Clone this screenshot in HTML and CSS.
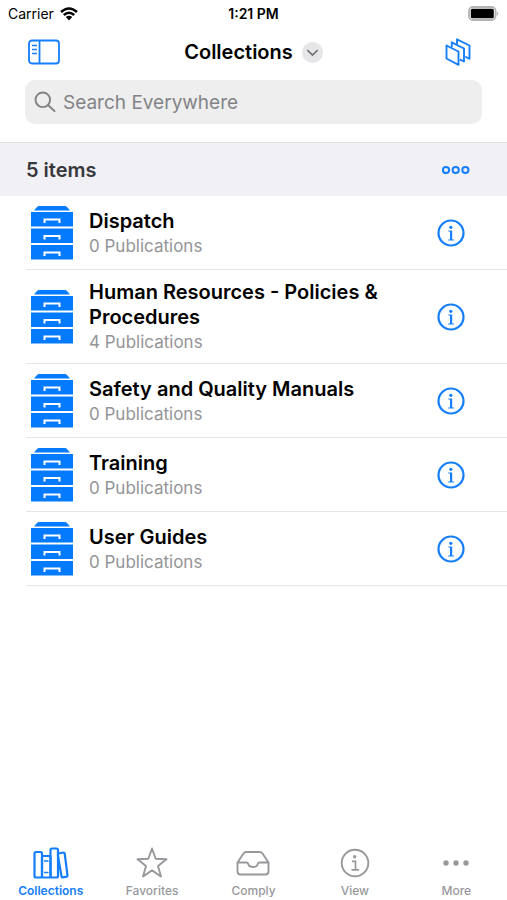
FILE: index.html
```html
<!DOCTYPE html>
<html lang="en">
<head>
<meta charset="utf-8">
<meta name="viewport" content="width=device-width, initial-scale=1">
<title>Collections</title>
<link rel="stylesheet" href="styles.css">
</head>
<body>
<svg class="symbols" aria-hidden="true">
  <symbol id="cabinet" viewBox="0 0 42 54">
    <path fill="currentColor" d="M3 4.500 6 1Q7 0 8 0H34Q35 0 36 1L39 4.500ZM0 6H42V20.500H0ZM0 22.500H42V37H0ZM0 39H42V53.500H0Z"/>
    <path fill="none" stroke="#fff" stroke-width="2" d="M13.500 17V13.500H28.500V17M13.500 33.500V30H28.500V33.500M13.500 50V46.500H28.500V50"/>
  </symbol>
  <symbol id="info" viewBox="0 0 28 28">
    <circle cx="14" cy="14" r="12.500" fill="none" stroke="currentColor" stroke-width="2.200"/>
    <circle cx="13.800" cy="8.300" r="1.600" fill="currentColor"/>
    <path fill="currentColor" d="M11.300 11.500H15.200V20.500H17V21.600H11.200V20.500H13V12.600H11.300Z"/>
  </symbol>
</svg>
<div class="app">
  <header>
    <div class="status">
      <span class="carrier">Carrier
        <svg width="18" height="14" viewBox="0 0 18 14" fill="none" stroke="#000" stroke-width="2.400"><path d="M1 5Q9-2 17 5M3.800 8Q9 3.300 14.200 8"/><path fill="#000" stroke="none" d="M5.800 10Q9 7.300 12.200 10L9 13.500Z"/></svg>
      </span>
      <time>1:21 PM</time>
      <svg class="battery" width="31" height="15" viewBox="0 0 31 15"><rect x="1" y="1" width="26.500" height="13" rx="4" fill="#fff" stroke="#b4b4b4" stroke-width="1.800"/><rect x="2.800" y="2.800" width="23" height="9.500" rx="1.500" fill="#000"/><path d="M28.800 5Q31.500 7.500 28.800 10Z" fill="#b4b4b4"/></svg>
    </div>
    <div class="nav">
      <button class="icon-button" aria-label="Toggle sidebar">
        <svg width="32" height="26" viewBox="0 0 32 26" fill="none" stroke="currentColor" stroke-width="1.800"><rect x="1" y="1.500" width="30" height="23" rx="3"/><path d="M11.500 1.500V24.500"/><path stroke-width="1.300" d="M4 6.500H9M4 10.500H9M4 14.500H9"/></svg>
      </button>
      <button class="title"><h1>Collections</h1>
        <svg width="21" height="21" viewBox="0 0 21 21"><circle cx="10.500" cy="10.500" r="10.500" fill="#e6e6e8"/><path d="M5.800 8.500 10.500 13 15.200 8.500" fill="none" stroke="#6e6e73" stroke-width="1.700" stroke-linecap="round"/></svg>
      </button>
      <button class="icon-button stacks" aria-label="Stacks">
        <svg width="26" height="28" viewBox="0 0 26 28" fill="none" stroke="currentColor" stroke-width="1.900" stroke-linejoin="round" stroke-linecap="round"><path d="M1.500 7.500 13.500 13.500V26.800L1.500 20.500Z"/><path d="M6.800 8.500V4.300L19 10.500V23.500L15.500 21.800"/><path d="M12 5.500V1.300L24.500 7.500V20.800L21 19"/></svg>
      </button>
    </div>
    <label class="search">
      <svg width="22" height="22" viewBox="0 0 22 22" fill="none" stroke="currentColor" stroke-width="1.900" stroke-linecap="round"><circle cx="8.800" cy="8.800" r="7.300"/><path d="M14.200 14.200 20.500 20"/></svg>
      <input type="search" placeholder="Search Everywhere" aria-label="Search Everywhere">
    </label>
  </header>
  <main>
    <div class="section">
      <h2>5 items</h2>
      <button class="icon-button" aria-label="Options">
        <svg width="28" height="10" viewBox="0 0 28 10" fill="none" stroke="currentColor" stroke-width="2"><circle cx="4" cy="5" r="3.100"/><circle cx="13.700" cy="5" r="3.100"/><circle cx="23.400" cy="5" r="3.100"/></svg>
      </button>
    </div>
    <ul class="list">
      <li><svg class="cabinet"><use href="#cabinet"/></svg><div class="text"><h3>Dispatch</h3><p>0 Publications</p></div><button class="icon-button" aria-label="About Dispatch"><svg class="info"><use href="#info"/></svg></button></li>
      <li><svg class="cabinet"><use href="#cabinet"/></svg><div class="text"><h3>Human Resources - Policies &amp; Procedures</h3><p>4 Publications</p></div><button class="icon-button" aria-label="About Human Resources"><svg class="info"><use href="#info"/></svg></button></li>
      <li><svg class="cabinet"><use href="#cabinet"/></svg><div class="text"><h3>Safety and Quality Manuals</h3><p>0 Publications</p></div><button class="icon-button" aria-label="About Safety and Quality Manuals"><svg class="info"><use href="#info"/></svg></button></li>
      <li><svg class="cabinet"><use href="#cabinet"/></svg><div class="text"><h3>Training</h3><p>0 Publications</p></div><button class="icon-button" aria-label="About Training"><svg class="info"><use href="#info"/></svg></button></li>
      <li><svg class="cabinet"><use href="#cabinet"/></svg><div class="text"><h3>User Guides</h3><p>0 Publications</p></div><button class="icon-button" aria-label="About User Guides"><svg class="info"><use href="#info"/></svg></button></li>
    </ul>
  </main>
  <nav class="tabs">
    <a href="#collections" class="active" aria-current="page">
      <svg width="36" height="32" viewBox="0 0 36 32" fill="none" stroke="currentColor" stroke-width="2.200" stroke-linejoin="round"><rect x="1.500" y="5" width="7.500" height="25.500" rx="1.500"/><rect x="9" y="9" width="8.500" height="21.500" rx="1"/><path stroke-width="1.500" d="M11 14H15.500M11 25.500H15.500"/><rect x="17.500" y="1.500" width="7.500" height="29" rx="1.500"/><path d="M25 6.500 30.500 5.500Q31.500 5.500 31.700 6.500L34.500 28.500Q34.600 29.500 33.700 29.700L29.700 30.400Q28.700 30.500 28.500 29.500L25 9Z"/></svg>
      Collections</a>
    <a href="#favorites">
      <svg width="36" height="32" viewBox="0 0 36 32" fill="none" stroke="currentColor" stroke-width="1.900" stroke-linejoin="round"><path d="M18 1.500 21.700 11.800 32.500 12.200 24 18.900 27 29.500 18 23.400 9 29.500 12 18.900 3.500 12.200 14.300 11.800Z"/></svg>
      Favorites</a>
    <a href="#comply">
      <svg width="36" height="32" viewBox="0 0 36 32" fill="none" stroke="currentColor" stroke-width="1.900" stroke-linejoin="round"><path d="M2.500 15.500 8.500 6.500Q9.500 5 11.500 5H24.500Q26.500 5 27.500 6.500L33.500 15.500V24.500Q33.500 27.500 30.500 27.500H5.500Q2.500 27.500 2.500 24.500ZM2.500 15.500H11.500Q13 15.500 13.500 17.500 14.200 20 18 20T22.500 17.500Q23 15.500 24.500 15.500H33.500"/></svg>
      Comply</a>
    <a href="#view">
      <svg width="36" height="32" viewBox="0 0 36 32"><circle cx="18" cy="16" r="13.300" fill="none" stroke="currentColor" stroke-width="1.900"/><circle cx="17.700" cy="9.800" r="1.700" fill="currentColor"/><path fill="none" stroke="currentColor" stroke-width="1.700" d="M15 14.300H18.500V22.500M14.500 22.800H22"/></svg>
      View</a>
    <a href="#more">
      <svg width="36" height="32" viewBox="0 0 36 32" fill="currentColor"><circle cx="8" cy="16" r="2.700"/><circle cx="18" cy="16" r="2.700"/><circle cx="28" cy="16" r="2.700"/></svg>
      More</a>
  </nav>
</div>
</body>
</html>
```
FILE: styles.css
```css
* {
  box-sizing: border-box;
  margin: 0;
  padding: 0;
}

body {
  background: #fff;
  color: #000;
  font-family: Inter, "Liberation Sans", sans-serif;
}

svg {
  display: block;
  flex: none;
}

button {
  border: 0;
  background: none;
  color: inherit;
  font: inherit;
}

.symbols {
  position: absolute;
  width: 0;
  height: 0;
}

.app {
  min-height: 100vh;
  display: flex;
  flex-direction: column;
}

header {
  padding-bottom: 18px;
  border-bottom: 1px solid #e0e0e3;
}

.status,
.nav {
  display: grid;
  grid-template-columns: 1fr auto 1fr;
  align-items: center;
}

.status {
  height: 27px;
  padding: 0 8px;
  font-size: 14px;
}

.status time {
  font-weight: 600;
}

.carrier {
  display: flex;
  align-items: center;
  gap: 6px;
}

.battery {
  justify-self: end;
}

.nav {
  height: 50px;
  padding: 0 28px;
}

.icon-button {
  justify-self: start;
  color: #147efb;
}

.stacks {
  justify-self: end;
  margin-right: 8px;
}

.title {
  display: flex;
  align-items: center;
  gap: 9px;
}

h1,
h3 {
  font-size: 20px;
  line-height: 25px;
  font-weight: 600;
}

.search {
  display: flex;
  align-items: center;
  gap: 7px;
  height: 44px;
  margin: 3px 25px 0;
  padding: 0 9px;
  border-radius: 10px;
  background: #eee;
  color: #838387;
}

.search input {
  flex: 1;
  min-width: 0;
  border: 0;
  outline: 0;
  background: none;
  font: inherit;
  font-size: 19px;
}

.search input::placeholder {
  color: #838387;
}

.section {
  display: flex;
  align-items: center;
  justify-content: space-between;
  height: 53px;
  padding: 0 37px 0 26px;
  background: #f1f0f5;
}

.section h2 {
  color: #38383c;
  font-size: 20px;
  font-weight: 600;
}

.list {
  list-style: none;
}

.list li {
  display: flex;
  align-items: center;
  gap: 16px;
  margin-left: 26px;
  padding: 10px 42px 9px 5px;
  border-bottom: 1px solid #e6e6e8;
}

.cabinet {
  width: 42px;
  height: 54px;
  color: #047aff;
}

.text {
  flex: 1;
}

.text p {
  color: #949498;
  font-size: 17px;
  line-height: 24px;
}

.info {
  width: 28px;
  height: 28px;
}

.tabs {
  display: grid;
  grid-template-columns: repeat(5, 1fr);
  margin-top: auto;
  padding-bottom: 1px;
}

.tabs a {
  display: flex;
  flex-direction: column;
  align-items: center;
  gap: 4px;
  color: #98989c;
  font-size: 12px;
  line-height: 16px;
  font-weight: 500;
  text-decoration: none;
}

.tabs .active {
  color: #147efb;
  font-weight: 600;
}
```
